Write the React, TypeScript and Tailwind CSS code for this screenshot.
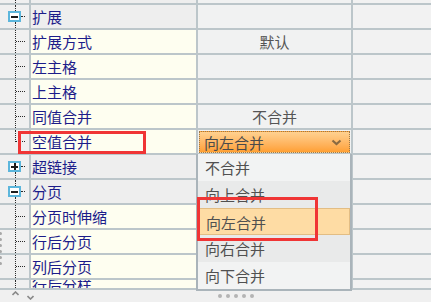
import React from "react";

type Kind = "top" | "open" | "closed" | "child" | "last" | "tail";

interface Row {
    name: string;
    kind: Kind;
    value?: string;
    select?: boolean;
}

const rows: Row[] = [
    { name: "扩展", kind: "open" },
    { name: "扩展方式", kind: "child", value: "默认" },
    { name: "左主格", kind: "child" },
    { name: "上主格", kind: "child" },
    { name: "同值合并", kind: "child", value: "不合并" },
    { name: "空值合并", kind: "last", select: true },
    { name: "超链接", kind: "closed" },
    { name: "分页", kind: "open" },
    { name: "分页时伸缩", kind: "child" },
    { name: "行后分页", kind: "child" },
    { name: "列后分页", kind: "child" },
];

const options = ["不合并", "向上合并", "向左合并", "向右合并", "向下合并"];

const vline = "absolute left-[15px] border-l border-dotted border-[#2a2a2a]";
const hline = "absolute top-[11px] border-t border-dotted border-[#2a2a2a]";

const TreeMark = ({ kind }: { kind: Kind }) => {
    const isNode = kind === "open" || kind === "closed";
    return (
        <div className="relative h-full w-full">
            {(kind === "top" || kind === "child" || kind === "tail") && (
                <div className={`${vline} top-0 bottom-0`} />
            )}
            {kind === "last" && <div className={`${vline} top-0 h-[12px]`} />}
            {kind === "open" && <div className={`${vline} top-0 h-[6px]`} />}
            {isNode && <div className={`${vline} top-[17px] bottom-0`} />}
            {(kind === "child" || kind === "last") && (
                <div className={`${hline} left-[16px] w-[9px]`} />
            )}
            {isNode && (
                <>
                    <div className="absolute left-[8px] top-[6px] flex h-[11px] w-[13px] items-center justify-center border-2 border-[#5cb6dc] bg-white">
                        <div className="absolute h-[2px] w-[7px] bg-[#1c1c1c]" />
                        {kind === "closed" && <div className="absolute h-[7px] w-[2px] bg-[#1c1c1c]" />}
                    </div>
                    <div className={`${hline} left-[21px] w-[4px]`} />
                </>
            )}
        </div>
    );
};

const Dropdown = () => (
    <div className="m-[1px] flex h-[22px] flex-1 items-center justify-between border border-dotted border-[#9c7a4a] bg-linear-to-b from-[#ffd190] to-[#ffa032] pl-[4px] pr-[7px] text-[#4a4a4a]">
        <span>向左合并</span>
        <svg width="11" height="7" viewBox="0 0 11 7">
            <path d="M1.5 1.5 L5.5 5 L9.5 1.5" fill="none" stroke="#8a6a42" strokeWidth="2.2" />
        </svg>
    </div>
);

export default function App() {
    return (
        <div
            className="relative h-[302px] w-[431px] overflow-hidden bg-[#f0f0f0] text-[15px] leading-[23px]"
            style={{ fontFamily: '"Noto Sans CJK SC", "Noto Sans", sans-serif' }}
        >
            {/* partial row at top */}
            <div className="flex h-[5px] border-b-2 border-[#bcc6ca]">
                <div className="w-[31px] border-r-2 border-[#bcc6ca] bg-[#f0f0f0]">
                    <TreeMark kind="top" />
                </div>
                <div className="w-[167px] border-r-2 border-[#bcc6ca] bg-[#eeeeee]" />
                <div className="w-[155px] border-r-2 border-[#bcc6ca] bg-[#f1f2f2]" />
                <div className="flex-1 bg-[#f2f2f2]" />
            </div>

            {rows.map((r) => {
                const header = r.kind === "open" || r.kind === "closed";
                return (
                    <div key={r.name} className="flex h-[25px] border-b-2 border-[#bcc6ca]">
                        <div className="w-[31px] border-r-2 border-[#bcc6ca] bg-[#f0f0f0]">
                            <TreeMark kind={r.kind} />
                        </div>
                        <div
                            className={`w-[167px] border-r-2 border-[#bcc6ca] pl-[1px] text-[#1c1c8a] ${
                                header ? "bg-[#eeeeee]" : "bg-[#fefef0]"
                            }`}
                        >
                            {r.name}
                        </div>
                        <div className="flex w-[155px] justify-center border-r-2 border-[#bcc6ca] bg-[#f1f2f2] text-[#555555]">
                            {r.select ? <Dropdown /> : r.value}
                        </div>
                        <div className="flex-1 bg-[#f2f2f2]" />
                    </div>
                );
            })}

            {/* last row, cut by the scroll area */}
            <div className="flex h-[10px] border-b-2 border-[#bcc6ca]">
                <div className="w-[31px] border-r-2 border-[#bcc6ca] bg-[#f0f0f0]">
                    <TreeMark kind="tail" />
                </div>
                <div className="flex w-[167px] items-center overflow-hidden border-r-2 border-[#bcc6ca] bg-[#fefef0] pl-[1px] text-[#1c1c8a]">
                    <span className="shrink-0">行后分样</span>
                </div>
                <div className="w-[155px] border-r-2 border-[#bcc6ca] bg-[#f1f2f2]" />
                <div className="flex-1 bg-[#f2f2f2]" />
            </div>

            {/* footer: scroll arrows + splitter grip */}
            <div className="flex h-[12px] items-start bg-[#f0f0f0] pl-[12px]">
                <svg width="7" height="5" viewBox="0 0 7 5" className="mt-[1px]">
                    <path d="M0.5 4 L3.5 1 L6.5 4" fill="none" stroke="#8a8a8a" strokeWidth="1.6" />
                </svg>
                <svg width="7" height="5" viewBox="0 0 7 5" className="ml-[8px] mt-[5px]">
                    <path d="M0.5 1 L3.5 4 L6.5 1" fill="none" stroke="#8a8a8a" strokeWidth="1.6" />
                </svg>
                <div className="ml-[184px] mt-[4px] flex gap-[4px]">
                    {[0, 1, 2, 3, 4].map((i) => (
                        <div key={i} className="h-[4px] w-[4px] rounded-full bg-[#b4b4b4]" />
                    ))}
                </div>
            </div>

            {/* left splitter grip */}
            <div className="absolute left-[-1px] top-[232px] flex flex-col gap-[3px]">
                {[0, 1, 2, 3, 4, 5].map((i) => (
                    <div key={i} className="h-[3px] w-[3px] rounded-full bg-[#a8a8a8]" />
                ))}
            </div>

            {/* open select list */}
            <div className="absolute left-[196px] top-[154px] flex w-[156px] flex-col border-x-2 border-b-2 border-[#aab4ba] text-[#505050]">
                {options.map((o, i) => (
                    <div
                        key={o}
                        className={`h-[27px] pl-[7px] leading-[27px] ${
                            i === 2
                                ? "border border-[#e2bd84] bg-[#fedca4] pl-[6px] leading-[25px]"
                                : i % 2 === 1
                                ? "bg-[#e9eaea]"
                                : "bg-[#f2f3f3]"
                        }`}
                    >
                        {o}
                    </div>
                ))}
            </div>

            {/* red annotation boxes */}
            <div className="absolute left-[18px] top-[131px] h-[23px] w-[128px] border-[3px] border-[#f03535]" />
            <div className="absolute left-[197px] top-[197px] h-[44px] w-[121px] border-[3px] border-[#f03535]" />
        </div>
    );
}
